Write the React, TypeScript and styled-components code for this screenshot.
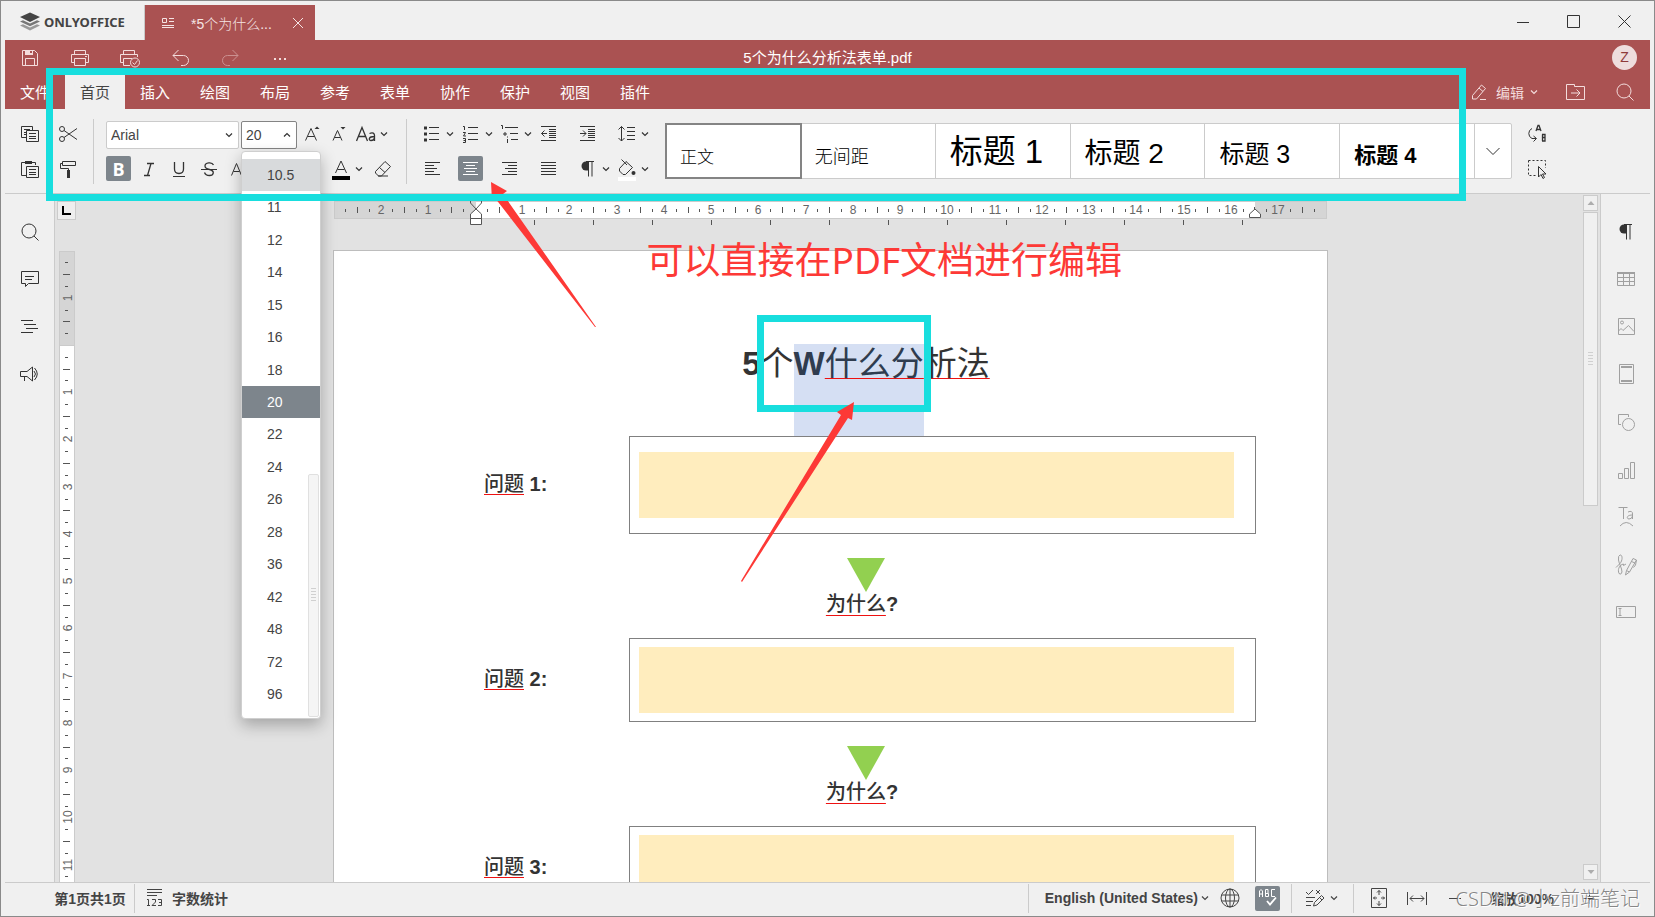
import React from "react";
import styled, { createGlobalStyle, css } from "styled-components";

const ui = `"Liberation Sans", "Noto Sans CJK SC", sans-serif`;
const red = "#aa5252";
const cyan = "#18dede";
const line = "#cbcbcb";
const ink = "#444";

const Global = createGlobalStyle`
  * { box-sizing: border-box; }
  body { margin: 0; background: #f0f0f0; font-family: ${ui}; font-size: 14px; color: ${ink}; }
  button, select, textarea { font: inherit; color: inherit; margin: 0; padding: 0; border: 0; background: none; border-radius: 0; }
  svg { display: block; flex: none; }
`;

/* ---------- icons ---------- */

type IconProps = { children: React.ReactNode; size?: number; width?: number; color?: string; fade?: boolean };

const Svg = styled.svg<{ $c?: string; $fade?: boolean }>`
  color: ${(p) => p.$c || "inherit"};
  opacity: ${(p) => (p.$fade ? 0.45 : 1)};
  fill: none;
  stroke: currentColor;
  stroke-width: 1;
`;

function Icon({ children, size = 20, width, color, fade }: IconProps) {
  const w = width || size;
  return (
    <Svg width={w} height={size} viewBox={`0 0 ${w} ${size}`} $c={color} $fade={fade} aria-hidden="true">
      {children}
    </Svg>
  );
}

const Chevron = ({ up = false, color }: { up?: boolean; color?: string }) => (
  <Icon size={8} color={color}>
    <path d={up ? "M1 5.5 4 2.5 7 5.5" : "M1 2.5 4 5.5 7 2.5"} strokeWidth="1.2" />
  </Icon>
);

const lines = (list: number[][]) => list.map(([x, y, w]) => <path key={`${x}-${y}`} d={`M${x} ${y}.5h${w}`} />);

const icons = {
  save: (
    <Icon>
      <path d="M2.500 2.500H14.500L17.500 5.500V17.500H2.500ZM5.500 17.500V10.500H14.500V17.500" />
      <path d="M5 2h8v5H5z" fill="currentColor" stroke="none" />
      <path d="M10 3h2v2h-2z" fill={red} stroke="none" />
    </Icon>
  ),
  print: (
    <Icon>
      <path d="M4.500 6.500V2.500H15.500V6.500M4.500 14.500H1.500V6.500H18.500V14.500H15.500M4.500 10.500H15.500V17.500H4.500ZM15 8.500h2" />
    </Icon>
  ),
  quickPrint: (
    <Icon size={22}>
      <path d="M4.500 7.500V3.500H15.500V7.500M4.500 15.500H1.500V7.500H18.500V10M11 18.500H4.500V11.500H13" />
      <circle cx="16" cy="15.500" r="4.500" />
      <path d="M13.500 15.500 15.500 17.500 18.500 13.500" />
    </Icon>
  ),
  undo: (
    <Icon>
      <path d="M8.500 2 3 7.500 8.500 13M3 7.500H13.500A5 5 0 0 1 13.500 17.500H11" />
    </Icon>
  ),
  redo: (
    <Icon fade>
      <path d="M12.500 2 18 7.500 12.500 13M18 7.500H7.500A5 5 0 0 0 7.500 17.500H10" />
    </Icon>
  ),
  more: (
    <Icon>
      <path d="M4 10h2v2H4zM9 10h2v2H9zM14 10h2v2h-2z" fill="currentColor" stroke="none" />
    </Icon>
  ),
  copy: (
    <Icon>
      <path d="M6 13.500H1.500V2.500H12.500V6M4 5.500h6M4 8.500h2M4 10.500h2" />
      <path d="M6.500 6.500H18.500V17.500H6.500ZM9 9.500h7M9 12.500h7M9 14.500h7" />
    </Icon>
  ),
  paste: (
    <Icon>
      <path d="M6 16.500H1.500V3.500H5M12 3.500H15.500V6" />
      <path d="M5 2h7v3H5z" fill="currentColor" stroke="none" />
      <path d="M6.500 7.500H18.500V18.500H6.500ZM9 10.500h7M9 13.500h7M9 15.500h7" />
    </Icon>
  ),
  cut: (
    <Icon>
      <circle cx="4" cy="5" r="2.500" />
      <circle cx="4" cy="15" r="2.500" />
      <path d="M6 6.500 19 15.500M6 13.500 19 4.500" />
    </Icon>
  ),
  brush: (
    <Icon>
      <path d="M4.500 2.500H17.500V6.500H4.500ZM4.500 4.500H2.500V9.500H10.500V11" />
      <path d="M9 11h3v8H9z" fill="currentColor" stroke="none" />
    </Icon>
  ),
  grow: (
    <Icon>
      <path d="M3.500 16.500 9 4.500 14.500 16.500M5.500 12.500h7" />
      <path d="M12.500 5 15 2.500 17.500 5z" fill="currentColor" stroke="none" />
    </Icon>
  ),
  shrink: (
    <Icon>
      <path d="M4 16.500 8.500 6.500 13 16.500M5.500 13.500h6" />
      <path d="M11.500 3 14 5.500 16.500 3z" fill="currentColor" stroke="none" />
    </Icon>
  ),
  caseAa: (
    <Icon>
      <path d="M.5 17 6 3.500 11.500 17M2.500 12.500h7" strokeWidth="1.300" />
      <path d="M13.500 9.500C17 8 18.500 9.500 18.500 11.500V17M18.500 12.500C12 12.500 12.500 16.500 15 16.500Q18 16.500 18.500 14" strokeWidth="1.300" />
    </Icon>
  ),
  italic: (
    <Icon>
      <path d="M8 4.500H15M5 16.500H11M12 4.500 8.500 16.500" strokeWidth="1.300" />
    </Icon>
  ),
  underline: (
    <Icon>
      <path d="M5.500 3V10Q5.500 14.500 10 14.500T14.500 10V3" strokeWidth="1.300" />
      <path d="M4 17.500h12" />
    </Icon>
  ),
  strike: (
    <Icon>
      <path d="M14.500 6C13 2.500 6 3.500 6 7Q6 9.500 10.500 10.500C16.500 12 14.500 16.500 10.500 16.500Q6.500 16.500 5.500 13.500" strokeWidth="1.300" />
      <path d="M2 10.500h16" />
    </Icon>
  ),
  superA: (
    <Icon>
      <path d="M2.500 16.500 7.500 4.500 12.500 16.500M4.500 12.500h6M15 3.500h3v2h-3v2h3" />
    </Icon>
  ),
  subA: (
    <Icon>
      <path d="M2.500 14.500 7.500 3.500 12.500 14.500M4.500 10.500h6M15 13.500h3v2h-3v2h3" />
    </Icon>
  ),
  marker: (
    <Icon>
      <path d="M5 12 13 3 16 6 8 14ZM5 12 4 15 8 14" />
      <path d="M2 16h16v3H2z" fill="#ff0" stroke="none" />
    </Icon>
  ),
  fontColor: (
    <Icon size={24} width={20}>
      <path d="M4.500 16 10 4 15.500 16M6.500 12.500h7" />
      <path d="M1 19h18v4H1z" fill="#000" stroke="none" />
    </Icon>
  ),
  eraser: (
    <Icon>
      <path d="M2.500 12.500 12 2.500 17.500 7.500 8.500 17H5.500L2.500 14ZM6.500 8.500 12 13.500M5 17h10" />
    </Icon>
  ),
  bullets: (
    <Icon>
      {lines([[7, 3, 10], [7, 9, 10], [7, 15, 10]])}
      <path d="M2 2.500h3v3H2zM2 8.500h3v3H2zM2 14.500h3v3H2z" fill="currentColor" stroke="none" />
    </Icon>
  ),
  numbers: (
    <Icon>
      {lines([[7, 3, 10], [7, 9, 10], [7, 15, 10]])}
      <path d="M2 2.500h1.500V6M2 8.500h2.500L2.500 12H5M2 14.500h2.500V18.500H2M2.500 16.500h2" />
    </Icon>
  ),
  levels: (
    <Icon>
      {lines([[5, 3, 13], [10, 9, 8], [11, 15, 7]])}
      <path d="M1 1.500h1.500V5M4 9h2v2H4zM7.500 15v4M7.500 12.500v1" />
    </Icon>
  ),
  outdent: (
    <Icon>
      {lines([[2, 2, 15], [10, 5, 7], [10, 7, 7], [10, 9, 7], [10, 11, 7], [10, 13, 7], [2, 16, 15]])}
      <path d="M8 9.500H2.500M5.500 6.500 2.500 9.500 5.500 12.500" />
    </Icon>
  ),
  indent: (
    <Icon>
      {lines([[2, 2, 15], [10, 5, 7], [10, 7, 7], [10, 9, 7], [10, 11, 7], [10, 13, 7], [2, 16, 15]])}
      <path d="M2 9.500H8M5 6.500 8 9.500 5 12.500" />
    </Icon>
  ),
  spacing: (
    <Icon>
      {lines([[10, 3, 8], [10, 7, 8], [10, 11, 8], [10, 15, 8]])}
      <path d="M4.500 2.500V17M1.500 5.500 4.500 2.500 7.500 5.500M1.500 14 4.500 17 7.500 14" />
    </Icon>
  ),
  left: <Icon>{lines([[3, 3, 15], [3, 6, 9], [3, 9, 12], [3, 12, 9], [3, 15, 15]])}</Icon>,
  center: <Icon>{lines([[2, 3, 15], [5, 6, 9], [3, 9, 13], [5, 12, 9], [2, 15, 15]])}</Icon>,
  right: <Icon>{lines([[2, 3, 15], [8, 6, 9], [5, 9, 12], [8, 12, 9], [2, 15, 15]])}</Icon>,
  justify: <Icon>{lines([[2, 3, 15], [2, 6, 15], [2, 9, 15], [2, 12, 15], [2, 15, 15]])}</Icon>,
  pilcrow: (
    <Icon>
      <path d="M10 2.500H8A4.500 4.500 0 0 0 8 11.500H10Z" fill="currentColor" stroke="none" />
      <path d="M8 2.500H16M10.500 2.500V17.500M14 2.500V17.500" />
    </Icon>
  ),
  bucket: (
    <Icon size={24} width={20}>
      <path d="M9 4.500 15.500 10.500 8.500 17.500H6L2.500 14V11.500ZM4.500 2.500 10 8" />
      <circle cx="16.500" cy="16" r="2" fill="currentColor" stroke="none" />
      <path d="M1 20h18v4H1z" fill="#fff" stroke="none" />
    </Icon>
  ),
  replace: (
    <Icon>
      <path d="M5 4.500A5.500 5.500 0 0 0 5 14.500H9M6.500 12 9.500 14.500 6.500 17.500" />
      <path d="M9 7 11 1.500H12L14 7M10 5.500h3M15.500 10.500V17M15 10.500h3v6.500h-3M15.500 13.500h3" strokeWidth="1.300" />
    </Icon>
  ),
  selectAll: (
    <Icon>
      <path d="M1.500 1.500H18.500V9M1.500 1.500V16.500H10" strokeDasharray="2 2" />
      <path d="M11.500 7.500V18L14 15.500 16 19.500 17.500 18.500 15.500 15H19Z" fill="#f0f0f0" />
    </Icon>
  ),
  pen: (
    <Icon>
      <path d="M2.500 13.500 11.500 3 15.500 6.500 6.500 17H2.500ZM9 6 13 9.500M10 17.500h6" />
    </Icon>
  ),
  folder: (
    <Icon>
      <path d="M1.500 2.500H9.500V4.500H19.500V17.500H1.500ZM6 11H15M11.500 7.500 15 11 11.500 14.500" />
    </Icon>
  ),
  search: (
    <Icon>
      <circle cx="9" cy="9" r="7" />
      <path d="M14 14 18.500 18.500" />
    </Icon>
  ),
  comment: (
    <Icon>
      <path d="M1.500 2.500H18.500V14.500H8.500L5.500 17.500V14.500H1.500ZM5 7.500h9M5 10.500h7" />
    </Icon>
  ),
  outline: <Icon>{lines([[1, 3, 12], [4, 7, 12], [6, 11, 12], [1, 15, 12]])}</Icon>,
  speaker: (
    <Icon>
      <path d="M.5 7.500H7L12.500 3V17L7 12.500H.5ZM4.500 12.500V17M14.500 4Q20 10 14.500 16M14 7Q17 10 14 13" />
    </Icon>
  ),
  table: (
    <Icon>
      <path d="M1.500 4V16.500H18.500V4M1.500 8.500H18.500M1.500 12.500H18.500M7.500 4V16M13.500 4V16" />
      <path d="M1 3h18v2H1z" fill="currentColor" stroke="none" />
    </Icon>
  ),
  image: (
    <Icon>
      <path d="M2.500 1.500H18.500V17.500H2.500ZM2.500 14 5 11.500 7 13.500 12.500 8.500 18 14.500" />
      <circle cx="6" cy="5.500" r="1.500" />
    </Icon>
  ),
  header: (
    <Icon>
      <path d="M3.500.5H17.500V19.500H3.500Z" />
      <path d="M5 2h11v2H5zM5 16h11v2H5z" fill="currentColor" stroke="none" />
    </Icon>
  ),
  shape: (
    <Icon>
      <path d="M5 12.500H2.500V2.500H12.500V5" />
      <circle cx="12.500" cy="12.500" r="6" />
    </Icon>
  ),
  chart: (
    <Icon>
      <path d="M2.500 13.500h4v5h-4zM8.500 8.500h4v10h-4zM14.500 2.500h4v16h-4z" />
    </Icon>
  ),
  textArt: (
    <Icon>
      <path d="M2.500.5H11.500M7.500.5V12M12 5Q16.500 3 16.500 7V12M16.500 8C10 8 10.500 12 13 12Q16 12 16.500 9M4 19Q10 12 17 19" />
    </Icon>
  ),
  signature: (
    <Icon size={22}>
      <path d="M1 13.500 5 9.500C8 6 7.500.5 5 1Q3 1.500 3.500 6C4 10 7 14 7 18Q6 21.500 4 19.500C2.500 16 4 12 7 10.500Q9 9 8.500 11.500L11 10" />
      <path d="M10.500 21 11.500 16.500 18 4.500 21.500 6 14.500 18ZM16.500 7.500 20 9M11.500 16.500 14.500 18M21.500 6 20.500 11 18.500 13.500" />
    </Icon>
  ),
  field: (
    <Icon>
      <path d="M.5 4.500H19.500V15.500H.5ZM2.500 6.500h3M2.500 13.500h3M4 6.500v7" />
    </Icon>
  ),
  count: (
    <Icon>
      {lines([[2, 1, 15], [2, 4, 15], [2, 7, 10]])}
      <path d="M2 11.500H3.500V17M2 17.500h3M7 11.500h3.500v2.500L7 17.500h4M13 11.500h3.500v6H13M14 14.500h2.500" />
    </Icon>
  ),
  globe: (
    <Icon>
      <circle cx="10" cy="10" r="9" />
      <ellipse cx="10" cy="10" rx="4.500" ry="9" />
      <path d="M10 1V19M1.500 7H18.500M1.500 13H18.500" />
    </Icon>
  ),
  spell: (
    <Icon>
      <path d="M1.500 9V3L3 1.500 4.500 3V9M1.500 6h3M7.500 1.500V8.500H10.500V5.500H7.500M7.500 1.500H10V5M17 1.500H13.500V8.500H17" />
      <path d="M9 13 12 16.500 18 9.500" strokeWidth="1.800" />
    </Icon>
  ),
  review: (
    <Icon>
      <path d="M1 4 3.500 6.500 8 2M11 2 15 6M15 2 11 6M1 9.500h9M1 13.500h7M1 17.500h5" />
      <path d="M8.500 18 9.500 14.500 16.500 7.500 19 10 12 17ZM14.500 9.500 17 12" />
    </Icon>
  ),
  fitPage: (
    <Icon>
      <path d="M2.500.5H17.500V19.500H2.500ZM10 7V2.500M8 4.500 10 2.500 12 4.500M10 13V17.500M8 15.500 10 17.500 12 15.500M8 10H4.500M6 8.500 4.500 10 6 11.500M12 10H15.500M14 8.500 15.500 10 14 11.500" />
    </Icon>
  ),
  fitWidth: (
    <Icon>
      <path d="M.5 4V17M19.500 4V17M3 10.500H17M6 7.500 3 10.500 6 13.500M14 7.500 17 10.500 14 13.500" />
    </Icon>
  ),
  minus: (
    <Icon size={12}>
      <path d="M0 6.500h12" />
    </Icon>
  ),
  plus: (
    <Icon size={12}>
      <path d="M0 6.500h12M6.500 0v12" />
    </Icon>
  ),
};

/* ---------- window frame ---------- */

const Window = styled.div`
  position: relative;
  display: flex;
  flex-direction: column;
  height: 100vh;
  min-height: 600px;
  overflow: hidden;
  padding: 0 4px;
  border: 1px solid #8a8a8a;
  background: #f0f0f0;
`;

const TitleBar = styled.div`
  display: flex;
  align-items: stretch;
  height: 39px;
  flex: none;
`;

const Brand = styled.div`
  display: flex;
  align-items: center;
  gap: 4px;
  width: 139px;
  padding: 3px 0 0 15px;
  font: 700 13px "Noto Sans", "Open Sans", sans-serif;
  color: ${ink};
`;

const DocTab = styled.div`
  display: flex;
  align-items: center;
  gap: 16px;
  width: 171px;
  margin-top: 4px;
  padding: 0 11px 0 16px;
  background: ${red};
  border-left: 1px solid #c9c9c9;
  color: #f5e4e4;
  span { flex: 1; white-space: nowrap; font-weight: 300; }
`;

const PlainButton = styled.button`
  display: flex;
  align-items: center;
  justify-content: center;
`;

const WindowButtons = styled.div`
  display: flex;
  margin-left: auto;
  ${PlainButton} { width: 51px; padding-top: 2px; color: #333; }
`;

const Header = styled.header`
  flex: none;
  height: 69px;
  background: ${red};
  color: #f3dcdc;
`;

const HeaderRow = styled.div`
  display: grid;
  grid-template-columns: 1fr auto 1fr;
  align-items: center;
  height: 35px;
`;

const QuickButtons = styled.div`
  display: flex;
  ${PlainButton} { width: 50px; height: 35px; }
`;

const DocName = styled.div`
  padding-bottom: 2px;
  font-size: 15px;
  color: #fff;
`;

const Avatar = styled.button`
  justify-self: end;
  width: 25px;
  height: 25px;
  margin-right: 13px;
  border-radius: 50%;
  background: #eedddd;
  color: #8e3b3b;
  line-height: 25px;
`;

const TabRow = styled.nav`
  display: flex;
  height: 34px;
`;

const Tab = styled.button<{ $active?: boolean }>`
  width: 60px;
  padding-bottom: 2px;
  font-size: 15px;
  color: ${(p) => (p.$active ? ink : "#fff")};
  background: ${(p) => (p.$active ? "#f0f0f0" : "transparent")};
`;

const TabTools = styled.div`
  display: flex;
  align-items: center;
  margin-left: auto;
  ${PlainButton} { width: 50px; }
`;

const ModeButton = styled.button`
  display: flex;
  align-items: center;
  gap: 6px;
  width: 68px;
  margin-right: 12px;
`;

/* ---------- toolbar ---------- */

const Toolbar = styled.div`
  display: flex;
  align-items: center;
  flex: none;
  height: 85px;
  border-bottom: 1px solid ${line};
  color: #333;
`;

const ToolGroup = styled.div`
  display: flex;
  flex-direction: column;
  gap: 6px;
`;

const ToolRow = styled.div<{ $gap: number }>`
  display: flex;
  align-items: center;
  height: 29px;
  gap: ${(p) => p.$gap}px;
`;

const ClipGrid = styled.div`
  display: grid;
  grid-template-columns: 38px 38px;
  row-gap: 6px;
  margin-left: 6px;
  ${PlainButton} { height: 29px; }
`;

const Divider = styled.i<{ $m?: string; $h?: number }>`
  flex: none;
  width: 1px;
  height: ${(p) => p.$h || 65}px;
  margin: ${(p) => p.$m || "0 12px"};
  background: ${line};
`;

const Tool = styled.button<{ $on?: boolean; $menu?: boolean; $w?: number }>`
  display: flex;
  align-items: center;
  justify-content: ${(p) => (p.$menu ? "flex-start" : "center")};
  gap: 4px;
  flex: none;
  width: ${(p) => p.$w || (p.$menu ? 37 : 25)}px;
  height: 25px;
  padding-left: ${(p) => (p.$menu ? 3 : 0)}px;
  border-radius: 2px;
  ${(p) => p.$on && css`background: #7d858c; color: #fff;`}
`;

const BoldMark = styled.b`
  font: 700 18px "Open Sans", sans-serif;
`;

const Picker = styled.div<{ $w: number; $open?: boolean }>`
  position: relative;
  width: ${(p) => p.$w}px;
  height: 28px;
  margin-top: 2px;
  select {
    appearance: none;
    width: 100%;
    height: 100%;
    padding: 0 4px;
    border: 1px solid ${(p) => (p.$open ? "#848484" : line)};
    border-radius: 2px;
    background: #fff;
    color: ${ink};
  }
  > svg { position: absolute; right: 6px; top: 10px; pointer-events: none; }
`;

const SizeMenu = styled.div`
  position: absolute;
  z-index: 5;
  top: 30px;
  left: 0;
  display: flex;
  flex-direction: column;
  width: 80px;
  height: 568px;
  padding: 7px 0;
  border: 1px solid #cfcfcf;
  border-radius: 4px;
  background: #fff;
  box-shadow: 0 6px 16px rgba(0, 0, 0, 0.28);
`;

const SizeItem = styled.button<{ $state?: "hover" | "on" }>`
  flex: 1;
  padding-left: 25px;
  text-align: left;
  background: ${(p) => (p.$state === "on" ? "#7d858c" : p.$state === "hover" ? "#d8dadc" : "transparent")};
  color: ${(p) => (p.$state === "on" ? "#fff" : ink)};
`;

const MenuThumb = styled.i`
  position: absolute;
  right: 1px;
  bottom: 1px;
  display: flex;
  align-items: center;
  justify-content: center;
  width: 11px;
  height: 243px;
  border: 1px solid #e0e0e0;
  border-radius: 2px;
  background: #f5f5f5;
`;

const Grip = styled.i`
  width: 5px;
  height: 15px;
  background: repeating-linear-gradient(#d0d0d0 0 1px, transparent 1px 3px);
`;

const ParaGrid = styled.div`
  display: grid;
  grid-template-columns: repeat(6, 37px);
  column-gap: 2px;
  align-items: center;
  height: 29px;
`;

const Gallery = styled.div`
  display: flex;
  flex: 0 1 847px;
  height: 56px;
  margin-left: 14px;
  border: 1px solid ${line};
  border-radius: 2px;
  background: #fff;
`;

const StyleCell = styled.button<{ $size: number; $weight: number; $on?: boolean }>`
  display: flex;
  align-items: baseline;
  align-content: flex-start;
  flex: 1 1 135px;
  padding-left: 14px;
  border-right: 1px solid ${line};
  font-size: ${(p) => p.$size}px;
  font-weight: ${(p) => p.$weight};
  line-height: 1;
  white-space: pre;
  color: #000;
  outline: ${(p) => (p.$on ? "2px solid #848484" : "none")};
  outline-offset: -1px;
  &::before { content: ""; height: 39px; }
`;

const GalleryMore = styled(PlainButton)`
  width: 36px;
`;

const EndTools = styled.div`
  display: grid;
  row-gap: 6px;
  width: 50px;
  ${PlainButton} { height: 29px; }
`;

/* ---------- work area ---------- */

const Work = styled.div`
  display: flex;
  flex: 1;
  min-height: 0;
  overflow: hidden;
`;

const SideBar = styled.aside<{ $right?: boolean }>`
  flex: none;
  width: 50px;
  padding-top: 14px;
  color: #333;
  ${(p) => (p.$right ? "border-left" : "border-right")}: 1px solid ${line};
`;

const SideList = styled.div<{ $count: number; $muted?: boolean }>`
  display: flex;
  flex-direction: column;
  height: ${(p) => Math.round(p.$count * 47.5)}px;
  ${PlainButton} { flex: 1; color: ${(p) => (p.$muted ? "#a0a0a0" : "#333")}; }
  ${PlainButton}:first-child { color: #333; }
`;

const RulerColumn = styled.div`
  display: flex;
  flex-direction: column;
  flex: none;
  gap: 31px;
  width: 23px;
  padding: 7px 0 0 2px;
  background: #e2e2e2;
`;

const VRuler = styled.div`
  flex: 1;
  min-height: 0;
  width: 16px;
  margin-left: 2px;
  overflow: hidden;
  border: solid #cbcbcb;
  border-width: 1px 1px 0;
  background: #fff;
`;

const TabStop = styled.button`
  display: flex;
  align-items: center;
  justify-content: center;
  flex: none;
  width: 19px;
  height: 19px;
  border: 1px solid ${line};
  background: #eee;
  &::after { content: ""; width: 7px; height: 7px; border: solid #000; border-width: 0 0 2px 2px; }
`;

const Canvas = styled.main`
  flex: 1;
  display: flex;
  flex-direction: column;
  align-items: center;
  overflow: hidden;
  background: #e2e2e2;
  > svg { margin-top: 7px; }
`;

const Sheet = styled.article`
  flex: none;
  width: 995px;
  margin-top: 23px;
  padding: 93px 71px 60px 142px;
  border: 1px solid #bdbdbd;
  background: #fff;
  color: #333;
`;

const Heading = styled.h1`
  display: flex;
  justify-content: center;
  height: 92px;
  margin: 0;
  font-size: 33px;
  line-height: 40px;
  font-weight: 700;
  mark { background: #d5dff3; color: #2f3c4f; }
  i { font-style: normal; font-weight: 400; }
`;

const Flag = styled.u<{ $gap: number; $weight: number }>`
  font-weight: ${(p) => p.$weight};
  text-decoration: underline 1px #ee1111;
  text-underline-offset: ${(p) => p.$gap}px;
  text-decoration-skip-ink: none;
`;

const Question = styled.div`
  display: flex;
  align-items: center;
  label { width: 153px; padding: 0 0 6px 8px; font-size: 20px; font-weight: 700; white-space: pre; }
`;

const AnswerBox = styled.div<{ $pad: number }>`
  display: flex;
  flex: 1;
  padding: ${(p) => p.$pad - 1}px 21px ${(p) => p.$pad - 1}px 9px;
  border: 1px solid #808080;
  textarea { flex: 1; height: 66px; resize: none; background: #ffedbe; outline: 0; }
`;

const Why = styled.div`
  display: flex;
  flex-direction: column;
  align-items: center;
  height: 104px;
  padding-top: 24px;
  p { margin: 0; padding-right: 8px; font-size: 20px; line-height: 24px; font-weight: 700; }
`;

const ScrollBar = styled.div`
  display: flex;
  flex-direction: column;
  flex: none;
  gap: 1px;
  width: 17px;
  padding: 1px 2px 2px 0;
  background: #e2e2e2;
`;

const ScrollButton = styled(PlainButton)`
  height: 16px;
  border: 1px solid ${line};
  background: #f0f0f0;
  color: #adadad;
`;

const ScrollThumb = styled.i`
  display: flex;
  align-items: center;
  justify-content: center;
  height: 294px;
  margin-bottom: auto;
  border: 1px solid ${line};
  background: #f0f0f0;
`;

/* ---------- status bar ---------- */

const Status = styled.footer`
  display: flex;
  align-items: center;
  flex: none;
  height: 34px;
  padding: 0 42px 3px 44px;
  border-top: 1px solid ${line};
  font-weight: 700;
`;

const StatusText = styled.span<{ $w?: number }>`
  width: ${(p) => (p.$w ? p.$w + "px" : "auto")};
  text-align: center;
  white-space: nowrap;
`;

const StatusButton = styled.button<{ $w?: number; $gap?: number }>`
  display: flex;
  align-items: center;
  justify-content: center;
  gap: ${(p) => p.$gap ?? 7}px;
  height: 26px;
  width: ${(p) => (p.$w ? p.$w + "px" : "auto")};
  font-weight: 700;
  color: ${ink};
`;

const StatusRight = styled.div`
  display: flex;
  align-items: center;
  margin-left: auto;
`;

const SpellTool = styled(Tool)`
  margin-left: 4px;
`;

/* ---------- annotations over the window ---------- */

const Frame = styled.div`
  position: absolute;
  z-index: 11;
  border: 7px solid ${cyan};
  pointer-events: none;
`;
const RibbonFrame = styled(Frame)`
  top: 67px;
  left: 45px;
  right: 188px;
  height: 133px;
`;
const TitleFrame = styled(Frame)`
  top: 314px;
  left: calc(50% - 71px);
  width: 174px;
  height: 97px;
`;
const Arrow = styled.svg<{ $x: number; $y: number; $z: number }>`
  position: absolute;
  z-index: ${(p) => p.$z};
  left: calc(50% + ${(p) => p.$x}px);
  top: ${(p) => p.$y}px;
  fill: #fd3936;
  pointer-events: none;
`;
const Note = styled.p`
  position: absolute;
  z-index: 12;
  top: 231px;
  left: calc(50% - 181px);
  margin: 0;
  font: 400 37px/56px "Noto Sans", "Noto Sans CJK SC", sans-serif;
  white-space: nowrap;
  color: #fd3936;
`;
const Watermark = styled.span`
  position: absolute;
  z-index: 12;
  right: 14px;
  bottom: 1px;
  font: 300 20px/32px "Noto Sans", "Noto Sans CJK SC", sans-serif;
  white-space: nowrap;
  color: rgba(120, 120, 120, 0.9);
  text-shadow: 1px 1px 0 #fff;
`;

/* ---------- rulers ---------- */

const CM = 47.24;
const RulerText = styled.text`
  font: 12px ${ui};
  fill: #666;
  stroke: none;
  text-anchor: middle;
`;

function ticks(from: number, to: number, zero: number) {
  const out: { p: number; label?: number; half: boolean }[] = [];
  for (let q = from; q <= to; q++) {
    if (q === 0) continue;
    out.push({ p: Math.round(zero + (q * CM) / 4), label: q % 4 === 0 ? Math.abs(q / 4) : undefined, half: q % 2 === 0 });
  }
  return out;
}

function HorizontalRuler() {
  return (
    <svg width="993" height="26" viewBox="0 0 993 26" aria-hidden="true">
      <rect x="0.5" y="0.5" width="992" height="17" fill="#d5d5d5" stroke="#cbcbcb" />
      <rect x="142" y="1" width="779" height="16" fill="#fff" />
      {ticks(-11, 71, 141).map((t) =>
        t.label !== undefined ? (
          <RulerText key={t.p} x={t.p} y="13">{t.label}</RulerText>
        ) : (
          <path key={t.p} d={t.half ? `M${t.p}.5 6v6` : `M${t.p}.5 8v3`} stroke="#555" />
        )
      )}
      {Array.from({ length: 13 }, (_, i) => (
        <path key={i} d={`M${141 + (i + 1) * 59}.5 19v5`} stroke="#555" />
      ))}
      <path d="M136.500 -1V2L147.500 14V17M147.500 -1V2L136.500 14V17" stroke="#555" fill="none" />
      <path d="M136.500 17.500V13L142 8 147.500 13V17.500ZM136.500 17.500h11v6h-11z" fill="#fff" stroke="#555" />
      <path d="M915.500 16.500V13L921 8 926.500 13V16.500Z" fill="#fff" stroke="#555" />
    </svg>
  );
}

function VerticalRuler() {
  return (
    <VRuler>
      <svg width="14" height="628" viewBox="0 0 14 628" aria-hidden="true">
        <rect width="14" height="93" fill="#d5d5d5" />
        <path d="M0 93.500h14" stroke="#cbcbcb" />
        {ticks(-7, 45, 93).map((t) =>
          t.label !== undefined ? (
            <RulerText key={t.p} transform={`translate(12 ${t.p}) rotate(-90)`}>{t.label}</RulerText>
          ) : (
            <path key={t.p} d={t.half ? `M3 ${t.p}.5h7` : `M5 ${t.p}.5h3`} stroke="#555" />
          )
        )}
      </svg>
    </VRuler>
  );
}

/* ---------- data ---------- */

const quick: [string, React.ReactNode][] = [
  ["保存", icons.save],
  ["打印", icons.print],
  ["快速打印", icons.quickPrint],
  ["撤消", icons.undo],
  ["重做", icons.redo],
  ["更多", icons.more],
];
const tabs = ["文件", "首页", "插入", "绘图", "布局", "参考", "表单", "协作", "保护", "视图", "插件"];
const sizes = ["10.5", "11", "12", "14", "15", "16", "18", "20", "22", "24", "26", "28", "36", "42", "48", "72", "96"];
const styles: [string, number, number][] = [
  ["正文", 17, 300],
  ["无间距", 18, 300],
  ["标题 1", 33, 400],
  ["标题 2", 28, 400],
  ["标题 3", 25, 400],
  ["标题 4", 22, 700],
];
const rightTools = [icons.pilcrow, icons.table, icons.image, icons.header, icons.shape, icons.chart, icons.textArt, icons.signature, icons.field];
const rightNames = ["段落", "表格", "图像", "页眉和页脚", "形状", "图表", "艺术字", "签名", "表单"];

function Connector() {
  return (
    <Why>
      <svg width="38" height="34" viewBox="0 0 38 34" aria-hidden="true">
        <path d="M0 0H38L19 34Z" fill="#92d050" />
      </svg>
      <p>
        <Flag $gap={4} $weight={500}>为什么</Flag>?
      </p>
    </Why>
  );
}

function QuestionRow({ n, pad }: { n: number; pad: number }) {
  return (
    <Question>
      <label htmlFor={`answer-${n}`}>
        <Flag $gap={3} $weight={500}>问题</Flag> {n}:
      </label>
      <AnswerBox $pad={pad}>
        <textarea id={`answer-${n}`} />
      </AnswerBox>
    </Question>
  );
}

export default function App() {
  return (
    <Window>
      <Global />
      <TitleBar>
        <Brand>
          <svg width="20" height="20" viewBox="0 0 20 20" aria-hidden="true">
            <path d="M0 13.500 3 12.200 10 15.500 17 12.200 20 13.500 10 18.500Z" fill="#999" />
            <path d="M0 9.500 3 8.200 10 11.500 17 8.200 20 9.500 10 14.300Z" fill="#777" />
            <path d="M0 5 10 .5 20 5 10 10Z" fill="#444" />
          </svg>
          ONLYOFFICE
        </Brand>
        <DocTab>
          <Icon size={14}>
            <path d="M1.500 2.500h4v4h-4zM8 2.500h5M8 5.500h5M1 9.500h12M1 11.500h12" />
          </Icon>
          <span>*5个为什么...</span>
          <PlainButton aria-label="关闭文档">
            <Icon size={12}>
              <path d="M1 1 11 11M11 1 1 11" />
            </Icon>
          </PlainButton>
        </DocTab>
        <WindowButtons>
          <PlainButton aria-label="最小化">{icons.minus}</PlainButton>
          <PlainButton aria-label="最大化">
            <Icon size={13}>
              <path d="M.5.5h12v12H.5z" />
            </Icon>
          </PlainButton>
          <PlainButton aria-label="关闭">
            <Icon size={13}>
              <path d="M.5.5 12.500 12.500M12.500.5.5 12.500" />
            </Icon>
          </PlainButton>
        </WindowButtons>
      </TitleBar>

      <Header>
        <HeaderRow>
          <QuickButtons>
            {quick.map(([name, icon]) => (
              <PlainButton key={name} aria-label={name}>{icon}</PlainButton>
            ))}
          </QuickButtons>
          <DocName>5个为什么分析法表单.pdf</DocName>
          <Avatar aria-label="用户">Z</Avatar>
        </HeaderRow>
        <TabRow>
          {tabs.map((t) => (
            <Tab key={t} $active={t === "首页"}>{t}</Tab>
          ))}
          <TabTools>
            <ModeButton>
              {icons.pen}
              编辑
              <Chevron />
            </ModeButton>
            <PlainButton aria-label="打开文件位置">{icons.folder}</PlainButton>
            <PlainButton aria-label="查找">{icons.search}</PlainButton>
          </TabTools>
        </TabRow>
      </Header>

      <Toolbar>
        <ClipGrid>
          <PlainButton aria-label="复制">{icons.copy}</PlainButton>
          <PlainButton aria-label="剪切">{icons.cut}</PlainButton>
          <PlainButton aria-label="粘贴">{icons.paste}</PlainButton>
          <PlainButton aria-label="复制样式">{icons.brush}</PlainButton>
        </ClipGrid>
        <Divider $m="0 12px 0 6px" />
        <ToolGroup>
          <ToolRow $gap={2}>
            <Picker $w={133}>
              <select aria-label="字体" defaultValue="Arial">
                <option>Arial</option>
              </select>
              <Chevron />
            </Picker>
            <Picker $w={56} $open>
              <select aria-label="字号" defaultValue="20">
                {sizes.map((s) => (
                  <option key={s}>{s}</option>
                ))}
              </select>
              <Chevron up />
              <SizeMenu role="listbox" aria-label="字号列表">
                {sizes.map((s) => (
                  <SizeItem key={s} role="option" aria-selected={s === "20"} $state={s === "20" ? "on" : s === "10.5" ? "hover" : undefined}>
                    {s}
                  </SizeItem>
                ))}
                <MenuThumb>
                  <Grip />
                </MenuThumb>
              </SizeMenu>
            </Picker>
            <Tool aria-label="增大字号">{icons.grow}</Tool>
            <Tool aria-label="减小字号">{icons.shrink}</Tool>
            <Tool $menu $w={40} aria-label="更改大小写">
              {icons.caseAa}
              <Chevron />
            </Tool>
          </ToolRow>
          <ToolRow $gap={5}>
            <Tool $on aria-label="粗体"><BoldMark>B</BoldMark></Tool>
            <Tool aria-label="斜体">{icons.italic}</Tool>
            <Tool aria-label="下划线">{icons.underline}</Tool>
            <Tool aria-label="删除线">{icons.strike}</Tool>
            <Tool aria-label="上标">{icons.superA}</Tool>
            <Tool aria-label="下标">{icons.subA}</Tool>
            <Tool $menu aria-label="突出显示颜色">
              {icons.marker}
              <Chevron />
            </Tool>
            <Tool $menu aria-label="字体颜色">
              {icons.fontColor}
              <Chevron />
            </Tool>
            <Tool aria-label="清除样式">{icons.eraser}</Tool>
          </ToolRow>
        </ToolGroup>
        <Divider $m="0 12px 0 11px" />
        <ToolGroup>
          <ParaGrid>
            <Tool $menu aria-label="项目符号">{icons.bullets}<Chevron /></Tool>
            <Tool $menu aria-label="编号">{icons.numbers}<Chevron /></Tool>
            <Tool $menu aria-label="多级列表">{icons.levels}<Chevron /></Tool>
            <Tool aria-label="减少缩进">{icons.outdent}</Tool>
            <Tool aria-label="增加缩进">{icons.indent}</Tool>
            <Tool $menu aria-label="行距">{icons.spacing}<Chevron /></Tool>
          </ParaGrid>
          <ParaGrid>
            <Tool aria-label="左对齐">{icons.left}</Tool>
            <Tool $on aria-label="居中对齐">{icons.center}</Tool>
            <Tool aria-label="右对齐">{icons.right}</Tool>
            <Tool aria-label="两端对齐">{icons.justify}</Tool>
            <Tool $menu aria-label="非打印字符">{icons.pilcrow}<Chevron /></Tool>
            <Tool $menu aria-label="底纹">{icons.bucket}<Chevron /></Tool>
          </ParaGrid>
        </ToolGroup>
        <Gallery>
          {styles.map(([name, size, weight], i) => (
            <StyleCell key={name} $size={size} $weight={weight} $on={i === 0}>{name}</StyleCell>
          ))}
          <GalleryMore aria-label="更多样式">
            <Icon size={14}>
              <path d="M.5 4 7 10.500 13.500 4" />
            </Icon>
          </GalleryMore>
        </Gallery>
        <EndTools>
          <PlainButton aria-label="替换">{icons.replace}</PlainButton>
          <PlainButton aria-label="全选">{icons.selectAll}</PlainButton>
        </EndTools>
      </Toolbar>

      <Work>
        <SideBar>
          <SideList $count={4}>
            <PlainButton aria-label="查找">{icons.search}</PlainButton>
            <PlainButton aria-label="评论">{icons.comment}</PlainButton>
            <PlainButton aria-label="标题">{icons.outline}</PlainButton>
            <PlainButton aria-label="反馈和支持">{icons.speaker}</PlainButton>
          </SideList>
        </SideBar>
        <RulerColumn>
          <TabStop aria-label="制表位" />
          <VerticalRuler />
        </RulerColumn>
        <Canvas>
          <HorizontalRuler />
          <Sheet>
            <Heading>
              <span>5<i>个</i></span>
              <mark>W<Flag $gap={3} $weight={400}>什么分</Flag></mark>
              <Flag $gap={3} $weight={400}>析法</Flag>
            </Heading>
            <QuestionRow n={1} pad={16} />
            <Connector />
            <QuestionRow n={2} pad={9} />
            <Connector />
            <QuestionRow n={3} pad={9} />
          </Sheet>
        </Canvas>
        <ScrollBar>
          <ScrollButton aria-label="向上滚动">
            <Icon size={8}><path d="M.5 6 4 2 7.500 6Z" fill="currentColor" stroke="none" /></Icon>
          </ScrollButton>
          <ScrollThumb><Grip /></ScrollThumb>
          <ScrollButton aria-label="向下滚动">
            <Icon size={8}><path d="M.5 2 4 6 7.500 2Z" fill="currentColor" stroke="none" /></Icon>
          </ScrollButton>
        </ScrollBar>
        <SideBar $right>
          <SideList $count={9} $muted>
            {rightTools.map((icon, i) => (
              <PlainButton key={rightNames[i]} aria-label={rightNames[i]}>{icon}</PlainButton>
            ))}
          </SideList>
        </SideBar>
      </Work>

      <Status>
        <StatusText $w={82}>第1页共1页</StatusText>
        <Divider $h={29} $m="0 10px 0 3px" />
        <StatusButton>
          {icons.count}
          字数统计
        </StatusButton>
        <StatusRight>
          <Divider $h={29} $m="0 16px 0 0" />
          <StatusButton $gap={3}>
            English (United States)
            <Chevron />
          </StatusButton>
          <StatusButton $w={42} aria-label="设置文档语言">{icons.globe}</StatusButton>
          <SpellTool $on aria-label="拼写检查">{icons.spell}</SpellTool>
          <Divider $h={29} $m="0 10px 0 11px" />
          <StatusButton $w={38} $gap={5} aria-label="跟踪更改">
            {icons.review}
            <Chevron />
          </StatusButton>
          <Divider $h={29} $m="0 6px 0 13px" />
          <StatusButton $w={38} aria-label="适合页面">{icons.fitPage}</StatusButton>
          <StatusButton $w={38} aria-label="适合宽度">{icons.fitWidth}</StatusButton>
          <StatusButton $w={38} aria-label="缩小">{icons.minus}</StatusButton>
          <StatusText $w={96}>缩放100%</StatusText>
          <StatusButton $w={38} aria-label="放大">{icons.plus}</StatusButton>
        </StatusRight>
      </Status>

      <Arrow $x={-337} $y={181} $z={10} width="105" height="145" viewBox="0 0 105 145" aria-hidden="true">
        <path d="M0 0 16 9 12 12 105 145 104 145 4 16 1 19Z" />
      </Arrow>
      <RibbonFrame />
      <TitleFrame />
      <Arrow $x={-87} $y={401} $z={12} width="113" height="180" viewBox="0 0 113 180" aria-hidden="true">
        <path d="M113 0 111 18 107 16 1 180 0 179 100 13 96 10Z" />
      </Arrow>
      <Note>可以直接在PDF文档进行编辑</Note>
      <Watermark>CSDN @小z前端笔记</Watermark>
    </Window>
  );
}
